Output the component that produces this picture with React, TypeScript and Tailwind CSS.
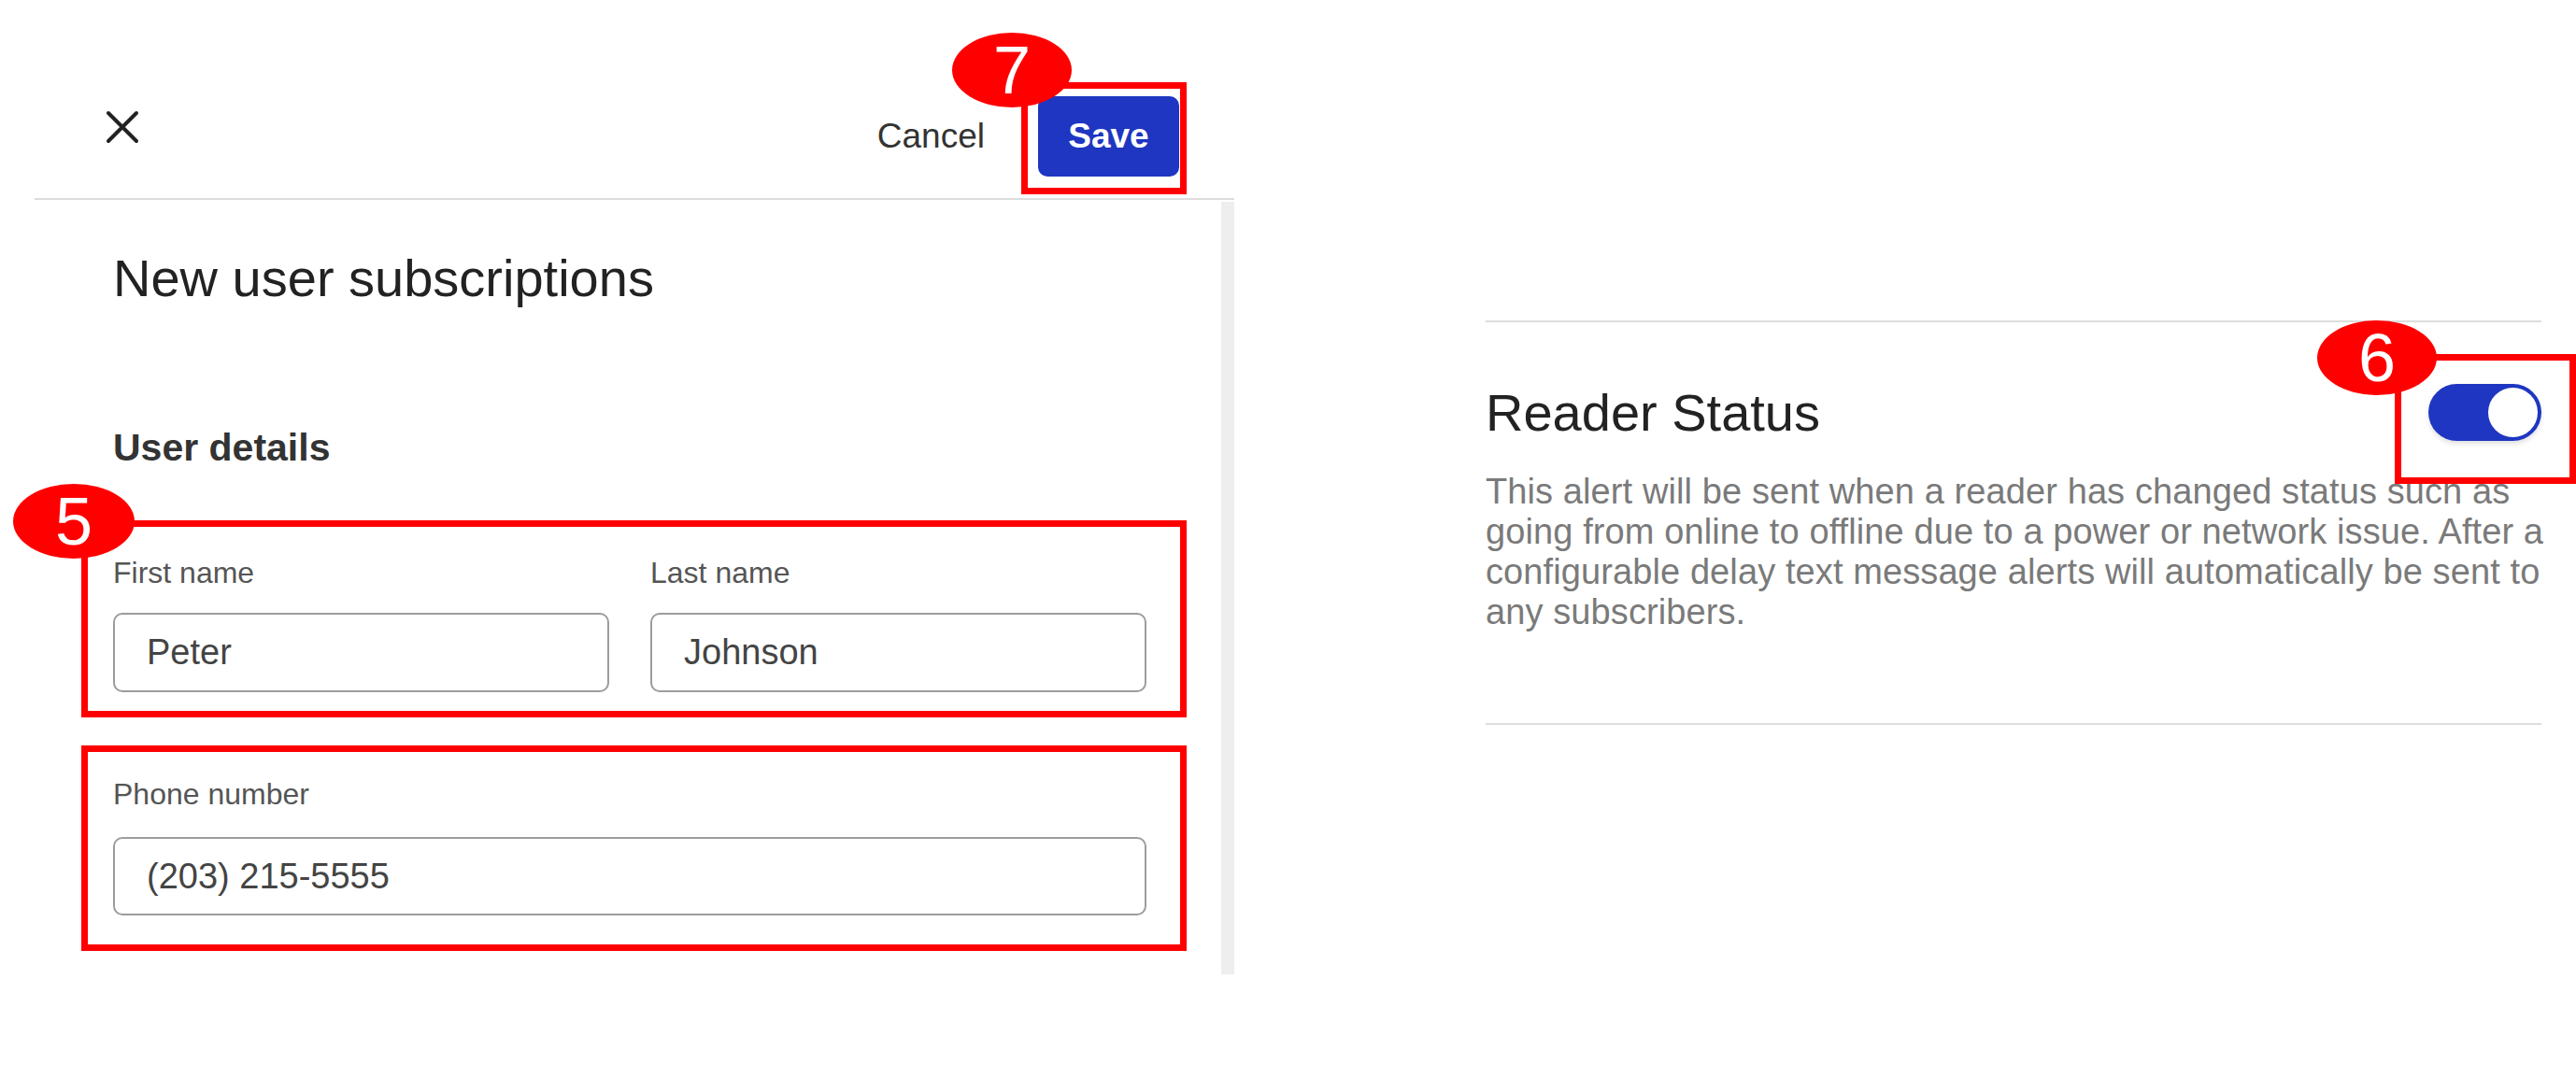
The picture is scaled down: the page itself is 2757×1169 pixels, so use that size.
import { useState } from "react";

type BadgeProps = { n: string; className: string };

const Badge = ({ n, className }: BadgeProps) => (
  <div
    className={`absolute z-10 flex h-[80px] w-[128px] items-center justify-center rounded-[50%] bg-[#ff0000] text-[72px] leading-none text-white ${className}`}
  >
    {n}
  </div>
);

const Field = ({ label, value }: { label: string; value: string }) => (
  <label className="block">
    <span className="block text-[32px] leading-[36px] text-[#555555]">
      {label}
    </span>
    <input
      readOnly
      value={value}
      className="mt-[25px] h-[85px] w-full rounded-[10px] border-2 border-[#9c9c9c] bg-white pl-[34px] text-[38px] text-[#444444] outline-none"
    />
  </label>
);

const App = () => {
  const [enabled, setEnabled] = useState(true);

  return (
    <div className="flex min-h-[1169px] bg-white font-['Liberation_Sans',Arial,sans-serif]">
      {/* drawer */}
      <div className="ml-[37px] w-[1284px] shrink-0">
        <header className="flex items-start justify-between border-b-2 border-[#dddddd] pb-[23px] pl-[76px] pr-[59px] pt-[103px]">
          <button className="mt-[15px] text-[#222222]" aria-label="Close">
            <svg width="36" height="36" viewBox="0 0 36 36" fill="none">
              <path
                d="M3 3 33 33M33 3 3 33"
                stroke="currentColor"
                strokeWidth="4"
                strokeLinecap="round"
              />
            </svg>
          </button>
          <div className="flex items-center gap-[57px]">
            <button className="text-[37px] text-[#333333]">Cancel</button>
            <div className="relative">
              <button className="h-[86px] w-[151px] rounded-[10px] bg-[#1e36c1] text-[37px] font-bold text-white">
                Save
              </button>
              <div className="pointer-events-none absolute -bottom-[19px] -left-[18px] -right-[8px] -top-[15px] border-[7px] border-[#ff0000]" />
              <Badge n="7" className="-left-[92px] -top-[68px]" />
            </div>
          </div>
        </header>

        <div className="flex h-[829px]">
          <div className="flex-1 pl-[50px] pr-[37px]">
            <h2 className="ml-[34px] pt-[52px] text-[56px] leading-[64px] text-[#222222]">
              New user subscriptions
            </h2>
            <h3 className="ml-[34px] mt-[125px] text-[41px] font-semibold leading-[48px] text-[#333333]">
              User details
            </h3>

            <div className="relative mt-[54px] border-[7px] border-[#ff0000] pb-[20px] pl-[27px] pr-[36px] pt-[31px]">
              <Badge n="5" className="-left-[80px] -top-[46px] w-[130px]" />
              <div className="grid grid-cols-2 gap-[44px]">
                <Field label="First name" value="Peter" />
                <Field label="Last name" value="Johnson" />
              </div>
            </div>

            <div className="mt-[30px] border-[7px] border-[#ff0000] pb-[31px] pl-[27px] pr-[36px] pt-[27px]">
              <span className="block text-[32px] leading-[36px] text-[#555555]">
                Phone number
              </span>
              <input
                readOnly
                value="(203) 215-5555"
                className="mt-[28px] h-[84px] w-full rounded-[10px] border-2 border-[#9c9c9c] bg-white pl-[34px] text-[38px] text-[#444444] outline-none"
              />
            </div>
          </div>
          <div className="mt-[2px] w-[14px] bg-[#eeeeee]" />
        </div>
      </div>

      {/* alert setting */}
      <div className="ml-[269px] mt-[343px] w-[1130px] shrink-0">
        <div className="border-y-2 border-[#dddddd] pb-[97px] pt-[66px]">
          <div className="flex items-start justify-between">
            <h2 className="text-[56px] leading-[62px] text-[#222222]">
              Reader Status
            </h2>
            <div className="relative">
              <button
                onClick={() => setEnabled(!enabled)}
                className={`flex h-[61px] w-[121px] items-center rounded-full px-[4px] shadow-[0_3px_5px_rgba(0,0,0,0.12)] ${
                  enabled ? "justify-end bg-[#1e36c1]" : "justify-start bg-gray-300"
                }`}
              >
                <span className="h-[53px] w-[53px] rounded-full bg-white" />
              </button>
              <div className="pointer-events-none absolute -bottom-[46px] -left-[36px] -right-[37px] -top-[32px] border-[7px] border-[#ff0000]" />
              <Badge n="6" className="-left-[119px] -top-[68px]" />
            </div>
          </div>
          <p className="-mr-[60px] mt-[32px] text-[38px] leading-[43px] tracking-[0.1px] text-[#7a7a7a]">
            This alert will be sent when a reader has changed status such as
            <br />
            going from online to offline due to a power or network issue. After a
            <br />
            configurable delay text message alerts will automatically be sent to
            <br />
            any subscribers.
          </p>
        </div>
      </div>
    </div>
  );
};

export default App;
